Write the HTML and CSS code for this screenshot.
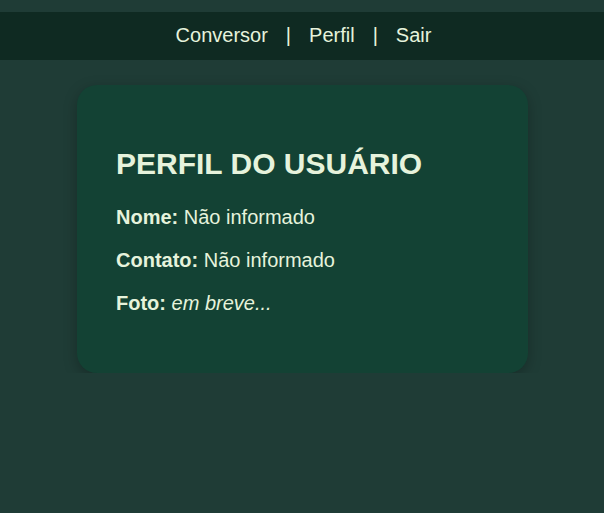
FILE: index.html
```html
<!DOCTYPE html>
<html lang="pt">
<head>
<meta charset="utf-8">
<title>Perfil</title>
<link rel="stylesheet" href="styles.css">
</head>
<body>
<nav class="topnav">
  <a class="nav-link" href="#">Conversor</a>
  <span class="sep">|</span>
  <a class="nav-link" href="#">Perfil</a>
  <span class="sep">|</span>
  <a class="nav-link" href="#">Sair</a>
</nav>
<main class="card">
  <h2 class="title">PERFIL DO USUÁRIO</h2>
  <p class="row"><strong>Nome:</strong> Não informado</p>
  <p class="row"><strong>Contato:</strong> Não informado</p>
  <p class="row"><strong>Foto:</strong> <em>em breve...</em></p>
</main>
</body>
</html>
```
FILE: styles.css
```css
html, body {
  margin: 0;
  padding: 0;
}
body {
  background: #1f3c36;
  color: #e6f3dc;
  font-family: "Liberation Sans", Arial, sans-serif;
  font-size: 20px;
  padding-top: 12px;
}
.topnav {
  background: #0f2a22;
  height: 48px;
  box-sizing: border-box;
  padding: 0 0 2px 3px;
  display: flex;
  align-items: center;
  justify-content: center;
  gap: 18px;
  line-height: 24px;
}
.nav-link {
  color: #e6f3dc;
  text-decoration: none;
}
.sep {
  color: #e6f3dc;
}
.card {
  width: 451px;
  box-sizing: border-box;
  margin: 25px 0 0 77px;
  background: #134234;
  border-radius: 20px;
  padding: 40px 40px 38px 39px;
  box-shadow: 0 4px 14px rgba(0, 0, 0, 0.25);
}
.title {
  font-size: 30px;
  font-weight: bold;
  margin: 22px 0 25px;
}
.row {
  margin: 20px 0;
}
```
